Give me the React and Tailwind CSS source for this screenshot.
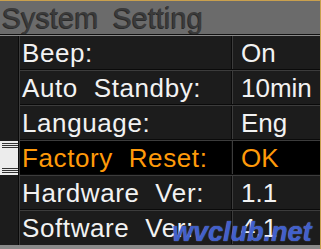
const rows = [
  { label: 'Beep:', value: 'On' },
  { label: 'Auto Standby:', value: '10min' },
  { label: 'Language:', value: 'Eng' },
  { label: 'Factory Reset:', value: 'OK', active: true },
  { label: 'Hardware Ver:', value: '1.1' },
  { label: 'Software Ver:', value: '4.1' },
];

const font = { fontFamily: '"Liberation Sans", Arial, sans-serif' };

const Row = ({ label, value, active, last }) => (
  <div className={`flex flex-col ${last ? 'h-[34px]' : 'h-[35px]'}`}>
    <div
      className={`flex h-[33px] ${active ? 'bg-black text-[#ff9a0a]' : 'text-[#f2f2f2]'}`}
    >
      <div className="w-[211px] pl-[2px] pt-[1px] text-[26px] leading-[32px] tracking-[0.6px] [word-spacing:8px] whitespace-nowrap">
        {label}
      </div>
      <div className="w-px bg-[#0a0a0a]" />
      <div className="w-px bg-[#3c3c3c]" />
      <div className="flex-1 pl-[8px] pt-[1px] text-[26px] leading-[32px] whitespace-nowrap">
        {value}
      </div>
    </div>
    {!last && (
      <>
        <div className="h-px bg-[#0a0a0a]" />
        <div className="h-px bg-[#3c3c3c]" />
      </>
    )}
  </div>
);

const Thumb = () => (
  <div className="mt-[105px] h-[34px] w-[18px] bg-[#ececec] flex flex-col justify-between py-[2px]">
    <div className="flex flex-col gap-[1px] pl-[2px]">
      <div className="h-px bg-[#333]" />
      <div className="h-px bg-[#333]" />
      <div className="h-px bg-[#333]" />
    </div>
    <div className="flex flex-col gap-[1px] pl-[2px]">
      <div className="h-px bg-[#333]" />
      <div className="h-px bg-[#333]" />
      <div className="h-px bg-[#333]" />
    </div>
  </div>
);

export default function App() {
  return (
    <div
      className="relative w-[321px] h-[249px] overflow-hidden bg-[#1c1c1c] border-t border-r border-[#c9a04e] flex flex-col"
      style={font}
    >
      <div className="h-[33px] bg-[#6b6b6b] pl-[2px] pt-[1px] text-[29px] leading-[33px] text-[#3b3b3b] [word-spacing:6px] [text-shadow:-1px_1px_0_#2b2b2b] whitespace-nowrap">
        System Setting
      </div>
      <div className="h-px bg-[#111]" />
      <div className="h-px bg-[#8a8a8a]" />

      <div className="flex flex-1">
        <div className="w-[18px]">
          <Thumb />
        </div>
        <div className="w-px bg-[#0a0a0a]" />
        <div className="w-px bg-[#3c3c3c]" />
        <div className="flex flex-col flex-1">
          {rows.map((r, i) => (
            <Row key={r.label} {...r} last={i === rows.length - 1} />
          ))}
        </div>
      </div>
      <div className="h-[4px] bg-[#8a8a8a]" />

      {/* watermark */}
      <div className="absolute left-[172px] top-[215px] text-[27px] leading-[32px] font-bold italic text-[#2a4cc0]/80 [text-shadow:0_0_1px_#9ab0ff] whitespace-nowrap">
        wvclub.net
      </div>
    </div>
  );
}
